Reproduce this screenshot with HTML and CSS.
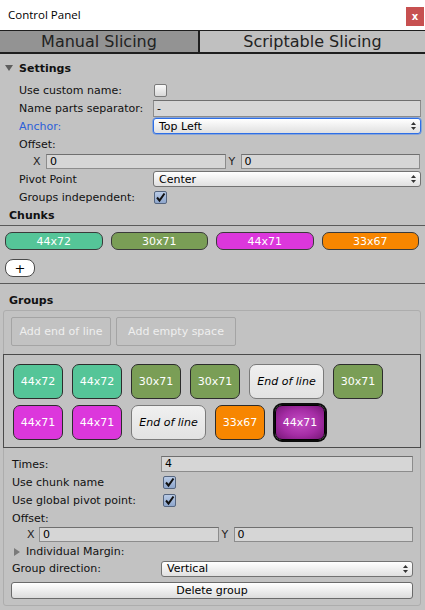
FILE: index.html
```html
<!DOCTYPE html>
<html>
<head>
<meta charset="utf-8">
<link rel="stylesheet" href="styles.css">
</head>
<body>
<div class="window">
  <header class="titlebar">
    <span class="title">Control Panel</span>
    <span class="close">x</span>
  </header>
  <nav class="tabs">
    <div class="tab active">Manual Slicing</div>
    <div class="tab">Scriptable Slicing</div>
  </nav>

  <section class="settings">
    <div class="fold">
      <svg class="tri" width="8" height="8" viewBox="0 0 8 8"><polygon points="0,1 8,1 4,7" fill="#5e5e5e"/></svg>
      <span class="bold">Settings</span>
    </div>
    <div class="row"><span class="lbl">Use custom name:</span><span class="check"></span></div>
    <div class="row"><span class="lbl">Name parts separator:</span><span class="field">-</span></div>
    <div class="row"><span class="lbl blue">Anchor:</span><span class="drop focus"><span>Top Left</span><svg width="5" height="8" viewBox="0 0 5 8"><polygon points="2.5,0 5,3 0,3" fill="#333"/><polygon points="0,5 5,5 2.5,8" fill="#333"/></svg></span></div>
    <div class="row tall"><span class="lbl">Offset:</span></div>
    <div class="xy xy-settings">
      <span class="axis">X</span><span class="field">0</span>
      <span class="axis y">Y</span><span class="field">0</span>
    </div>
    <div class="row"><span class="lbl">Pivot Point</span><span class="drop"><span>Center</span><svg width="5" height="8" viewBox="0 0 5 8"><polygon points="2.5,0 5,3 0,3" fill="#333"/><polygon points="0,5 5,5 2.5,8" fill="#333"/></svg></span></div>
    <div class="row"><span class="lbl">Groups independent:</span><span class="check on"><svg width="11" height="11" viewBox="0 0 11 11"><path d="M2 5.5 L4.5 8.5 L9.5 1.5" stroke="#111" stroke-width="2" fill="none"/></svg></span></div>
  </section>

  <div class="head chunks-head"><span class="bold">Chunks</span></div>
  <div class="chunks">
    <div class="chunk teal">44x72</div>
    <div class="chunk green">30x71</div>
    <div class="chunk magenta">44x71</div>
    <div class="chunk orange">33x67</div>
  </div>
  <div class="plus-row"><div class="plus">+</div></div>
  <div class="rule"></div>

  <div class="head groups-head"><span class="bold">Groups</span></div>
  <section class="groupbox">
    <div class="adds">
      <div class="add">Add end of line</div>
      <div class="add">Add empty space</div>
    </div>
    <div class="chain">
      <div class="gbtn teal">44x72</div>
      <div class="gbtn teal">44x72</div>
      <div class="gbtn green">30x71</div>
      <div class="gbtn green">30x71</div>
      <div class="gbtn eol">End of line</div>
      <div class="gbtn green">30x71</div>
      <div class="gbtn magenta">44x71</div>
      <div class="gbtn magenta">44x71</div>
      <div class="gbtn eol">End of line</div>
      <div class="gbtn orange">33x67</div>
      <div class="gbtn selected">44x71</div>
    </div>
    <div class="fields">
      <div class="grow"><span class="lbl">Times:</span><span class="field">4</span></div>
      <div class="grow"><span class="lbl">Use chunk name</span><span class="check on off1"><svg width="11" height="11" viewBox="0 0 11 11"><path d="M2 5.5 L4.5 8.5 L9.5 1.5" stroke="#111" stroke-width="2" fill="none"/></svg></span></div>
      <div class="grow"><span class="lbl">Use global pivot point:</span><span class="check on off1"><svg width="11" height="11" viewBox="0 0 11 11"><path d="M2 5.5 L4.5 8.5 L9.5 1.5" stroke="#111" stroke-width="2" fill="none"/></svg></span></div>
      <div class="grow"><span class="lbl">Offset:</span></div>
      <div class="xy xy-group">
        <span class="axis">X</span><span class="field">0</span>
        <span class="axis y">Y</span><span class="field">0</span>
      </div>
      <div class="grow short"><span class="lbl margin"><svg width="6" height="8" viewBox="0 0 6 8"><polygon points="0,0 6,4 0,8" fill="#7a7a7a"/></svg>Individual Margin:</span></div>
      <div class="grow short"><span class="lbl">Group direction:</span><span class="drop"><span>Vertical</span><svg width="5" height="8" viewBox="0 0 5 8"><polygon points="2.5,0 5,3 0,3" fill="#333"/><polygon points="0,5 5,5 2.5,8" fill="#333"/></svg></span></div>
      <div class="delete">Delete group</div>
    </div>
  </section>
</div>
</body>
</html>
```

FILE: styles.css
```css
html, body {
  margin: 0;
  padding: 0;
}
body {
  width: 425px;
  height: 610px;
  overflow: hidden;
  background: #c2c2c2;
  font-family: "DejaVu Sans", sans-serif;
  font-size: 11px;
  color: #111;
}
.window {
  display: flex;
  flex-direction: column;
}
.titlebar {
  height: 30px;
  background: #fff;
  display: flex;
  align-items: center;
  justify-content: space-between;
  padding-left: 8px;
  box-sizing: border-box;
}
.title {
  font-family: "Open Sans", "Noto Sans", sans-serif;
  font-size: 11.5px;
  color: #000;
  margin-top: -1px;
}
.close {
  width: 18px;
  height: 19px;
  background: #c75050;
  color: #fff;
  font-weight: bold;
  font-size: 10px;
  display: flex;
  align-items: center;
  justify-content: center;
  margin-right: 1px;
  margin-top: 3px;
}
.tabs {
  display: grid;
  grid-template-columns: 200px 1fr;
  height: 24px;
  box-sizing: border-box;
  border-top: 1px solid #1e1e1e;
  border-bottom: 2px solid #1e1e1e;
}
.tab {
  display: flex;
  align-items: center;
  justify-content: center;
  font-size: 16px;
  color: #222;
  background: #c0c0c0;
}
.tab.active {
  background: #939393;
  border-right: 2px solid #1e1e1e;
}
.bold {
  font-weight: bold;
}
.settings {
  padding-top: 5px;
}
.fold {
  height: 18px;
  display: flex;
  align-items: center;
  padding-left: 5px;
  gap: 6px;
  margin-bottom: 4px;
}
.tri {
  display: block;
}
.row {
  height: 18px;
  display: grid;
  grid-template-columns: 134px 1fr;
  align-items: center;
  padding: 0 4px 0 19px;
}
.row.tall {
  height: 19px;
}
.blue {
  color: #2b5fd9;
}
.check {
  width: 11px;
  height: 11px;
  border: 1px solid #7a7a7a;
  border-radius: 2px;
  background: linear-gradient(#fafafa, #d8d8d8);
  margin-left: 1px;
  display: flex;
  align-items: center;
  justify-content: center;
}
.check.on {
  background: linear-gradient(#b9cbe6, #8ea6cc);
  border-color: #55657f;
}
.check.off1 {
  margin-left: 2px;
}
.check svg {
  display: block;
}
.field {
  height: 15px;
  box-sizing: border-box;
  background: #d6d6d6;
  border: 1px solid #8c8c8c;
  border-top-color: #6f6f6f;
  padding-left: 3px;
  line-height: 13px;
  font-size: 11px;
  color: #000;
}
.row .field {
  height: 17px;
  line-height: 15px;
}
.drop {
  height: 16px;
  box-sizing: border-box;
  border: 1px solid #727272;
  border-radius: 3px;
  background: linear-gradient(#ffffff, #e0e0e0);
  display: flex;
  align-items: center;
  justify-content: space-between;
  padding: 0 4px 0 5px;
  color: #000;
}
.drop.focus {
  border: 1px solid #2d6ee6;
  box-shadow: 0 0 0 0.5px #4f86ea;
}
.drop svg {
  display: block;
}
.xy {
  display: grid;
  align-items: center;
  height: 16px;
  align-content: start;
}
.xy-settings {
  grid-template-columns: 13px 1fr 15px 1fr;
  padding: 0 5px 0 33px;
  height: 16px;
}
.xy-group {
  grid-template-columns: 12px 1fr 15px 1fr;
  padding: 0 0 0 15px;
}
.axis {
  color: #222;
}
.axis.y {
  padding-left: 3px;
}
.head {
  height: 19px;
  display: flex;
  align-items: center;
  padding-left: 9px;
}
.chunks-head {
  border-bottom: 1px solid #5a5a5a;
}
.chunks {
  margin-top: 6px;
  display: grid;
  grid-template-columns: repeat(4, 1fr);
  gap: 8px;
  padding: 0 6px 0 5px;
}
.chunk {
  height: 18px;
  box-sizing: border-box;
  border: 1px solid #3a3a3a;
  border-radius: 7px;
  color: #fff;
  display: flex;
  align-items: center;
  justify-content: center;
}
.teal { background: #55c598; }
.green { background: #7a9e56; }
.magenta { background: #dc37dc; }
.orange { background: #f78600; }
.plus-row {
  margin-top: 9px;
  padding-left: 5px;
  display: flex;
}
.plus {
  width: 30px;
  height: 18px;
  box-sizing: border-box;
  border: 1px solid #4a4a4a;
  border-radius: 8px;
  background: #fff;
  display: flex;
  align-items: center;
  justify-content: center;
  font-size: 13px;
  color: #000;
}
.rule {
  margin-top: 6px;
  height: 1px;
  background: #5a5a5a;
}
.groups-head {
  margin-top: 7px;
  height: 18px;
}
.groupbox {
  margin: 1px 4px 0 3px;
  border: 1px solid #adadad;
  border-radius: 3px;
  padding: 6px 7px 6px 8px;
}
.adds {
  display: flex;
  gap: 5px;
  margin-left: -1px;
}
.add {
  height: 29px;
  box-sizing: border-box;
  border: 1px solid #a4a4a4;
  border-radius: 2px;
  color: #efefef;
  display: flex;
  align-items: center;
  justify-content: center;
  width: 100px;
}
.add + .add {
  width: 120px;
}
.chain {
  margin: 8px -8px 0 -9px;
  border: 1px solid #4a4a4a;
  padding: 9px 9px 7px 9px;
  display: flex;
  flex-wrap: wrap;
  row-gap: 6px;
  column-gap: 9px;
}
.gbtn {
  width: 50px;
  height: 35px;
  box-sizing: border-box;
  border: 1px solid #2c2c2c;
  border-radius: 7px;
  color: #fff;
  display: flex;
  align-items: center;
  justify-content: center;
}
.gbtn.eol {
  width: 75px;
  background: linear-gradient(#f0f0f0, #e2e2e2);
  border-color: #7a7a7a;
  color: #000;
  font-style: italic;
}
.gbtn.selected {
  background: radial-gradient(ellipse at center, #c54ec5 0%, #a52da5 55%, #761676 100%);
  border: 1px solid #000;
  box-shadow: 0 0 0 2px #0c0c0c;
  margin-left: 1px;
}
.fields {
  margin-top: 7px;
}
.grow {
  height: 18px;
  display: grid;
  grid-template-columns: 149px 1fr;
  align-items: center;
}
.grow.short {
  height: 17px;
}
.grow .field {
  height: 16px;
  line-height: 14px;
}
.margin {
  display: flex;
  align-items: center;
  gap: 6px;
  padding-left: 2px;
  white-space: nowrap;
}
.margin svg {
  display: block;
}
.delete {
  margin-top: 5px;
  height: 17px;
  box-sizing: border-box;
  border: 1px solid #6a6a6a;
  border-radius: 3px;
  background: linear-gradient(#ffffff, #dcdcdc);
  display: flex;
  align-items: center;
  justify-content: center;
  color: #000;
  margin-left: -1px;
}
```
